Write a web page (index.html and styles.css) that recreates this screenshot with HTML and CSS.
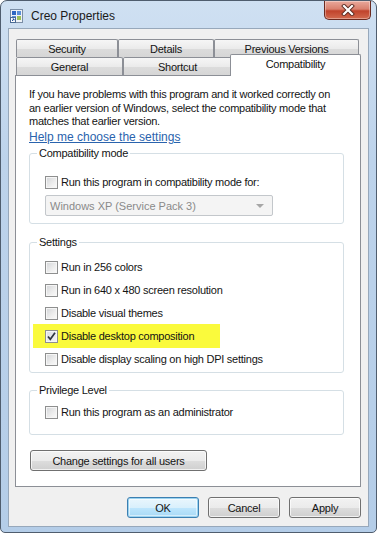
FILE: index.html
```html
<!DOCTYPE html>
<html lang="en">
<head>
    <meta charset="UTF-8">
    <meta name="viewport" content="width=device-width, initial-scale=1.0">
    <title>Creo Properties</title>
    <link rel="stylesheet" href="styles.css">
</head>
<body>
    <div class="window">
        <div class="titlebar">
            <svg class="app-icon" width="13" height="14" viewBox="0 0 13 14">
                <rect x="0.5" y="0.5" width="12" height="13" fill="#eef3f8" stroke="#7b8ea6"/>
                <rect x="2" y="2" width="4" height="4" fill="#2f67c2"/>
                <rect x="7" y="2" width="4" height="4" fill="#5b8fd8"/>
                <rect x="2" y="7" width="4" height="4" fill="#5b8fd8"/>
                <rect x="7" y="7" width="4" height="4" fill="#9cc05a"/>
                <rect x="0.5" y="8.5" width="5" height="5" fill="#fff" stroke="#4b6b95"/>
                <path d="M2 12 L4 10 M2.6 10 H4 V11.4" stroke="#1f4f9a" stroke-width="1" fill="none"/>
            </svg>
            <span class="title">Creo Properties</span>
            <div class="close">
                <svg width="14" height="12" viewBox="0 0 14 12">
                    <path d="M3 2 L11 10 M11 2 L3 10" stroke="#5a2a22" stroke-width="4" stroke-linecap="square"/>
                    <path d="M3 2 L11 10 M11 2 L3 10" stroke="#ffffff" stroke-width="2.2" stroke-linecap="square"/>
                </svg>
            </div>
        </div>

        <div class="client">
            <div class="tabs">
                <div class="tab-row">
                    <div class="tab tab-security">Security</div>
                    <div class="tab tab-details">Details</div>
                    <div class="tab tab-versions">Previous Versions</div>
                </div>
                <div class="tab-row front">
                    <div class="tab tab-general">General</div>
                    <div class="tab tab-shortcut">Shortcut</div>
                    <div class="tab tab-compat active">Compatibility</div>
                </div>
            </div>

            <div class="panel">
                <p class="intro">If you have problems with this program and it worked correctly on<br>an earlier version of Windows, select the compatibility mode that<br>matches that earlier version.</p>
                <a class="help" href="#">Help me choose the settings</a>

                <fieldset class="group group-mode">
                    <legend>Compatibility mode</legend>
                    <div class="check-row">
                        <span class="box"></span>
                        <span>Run this program in compatibility mode for:</span>
                    </div>
                    <div class="select">
                        <span>Windows XP (Service Pack 3)</span>
                        <span class="arrow"></span>
                    </div>
                </fieldset>

                <fieldset class="group group-settings">
                    <legend>Settings</legend>
                    <div class="check-list">
                        <div class="check-row"><span class="box"></span><span>Run in 256 colors</span></div>
                        <div class="check-row"><span class="box"></span><span>Run in 640 x 480 screen resolution</span></div>
                        <div class="check-row"><span class="box"></span><span>Disable visual themes</span></div>
                        <div class="check-row marked">
                            <span class="box">
                                <svg width="11" height="11" viewBox="0 0 11 11">
                                    <path d="M2 5.5 L4.3 8.3 L9 1.8" stroke="#2f3540" stroke-width="1.7" fill="none"/>
                                </svg>
                            </span>
                            <span>Disable desktop composition</span>
                        </div>
                        <div class="check-row"><span class="box"></span><span>Disable display scaling on high DPI settings</span></div>
                    </div>
                </fieldset>

                <fieldset class="group group-privilege">
                    <legend>Privilege Level</legend>
                    <div class="check-row"><span class="box"></span><span>Run this program as an administrator</span></div>
                </fieldset>

                <button class="btn btn-wide">Change settings for all users</button>
            </div>

            <div class="actions">
                <button class="btn btn-default">OK</button>
                <button class="btn">Cancel</button>
                <button class="btn">Apply</button>
            </div>
        </div>
    </div>
</body>
</html>
```

FILE: styles.css
```css
:root {
    --text-color: #141414;
    --face-color: #f0f0f0;
    --tab-border: #8c8f96;
    --group-border: #d5dfe5;
    --link-color: #2a63ad;
}

* {
    margin: 0;
    padding: 0;
    box-sizing: border-box;
}

body {
    font-family: "Liberation Sans", Arial, sans-serif;
    font-size: 11px;
    letter-spacing: -0.25px;
    color: var(--text-color);
    background-color: #ffffff;
    width: 377px;
    height: 533px;
    overflow: hidden;
}

.window {
    width: 377px;
    height: 533px;
    display: flex;
    flex-direction: column;
    padding: 0 7px 5px 7px;
    border: 1px solid #4f5d6e;
    border-radius: 7px 7px 5px 5px;
    background: linear-gradient(180deg, #cfe0f2 0%, #bdd3eb 30%, #b4cde8 100%);
}

/* title bar */

.titlebar {
    flex-shrink: 0;
    height: 27px;
    display: flex;
    align-items: flex-start;
}

.app-icon {
    margin: 8px 0 0 2px;
}

.title {
    margin: 8px 0 0 8px;
    font-size: 12px;
    letter-spacing: 0;
    color: #1a1a1a;
}

.close {
    margin-left: auto;
    margin-right: -2px;
    width: 47px;
    height: 19px;
    display: flex;
    align-items: center;
    justify-content: center;
    border: 1px solid #6b2a20;
    border-top: none;
    border-radius: 0 0 5px 5px;
    background: linear-gradient(180deg, #e9a99c 0%, #d9806e 45%, #c0432c 55%, #d26a4f 100%);
    box-shadow: inset 0 0 0 1px rgba(255, 255, 255, 0.35);
}

/* client area */

.client {
    flex: 1;
    min-height: 0;
    display: flex;
    flex-direction: column;
    background-color: var(--face-color);
    border: 1px solid #97a8bb;
    padding: 10px 7px 0 6px;
}

.tabs {
    margin-left: 1px;
}

.tab-row {
    display: flex;
    height: 18px;
}

.tab {
    height: 18px;
    display: flex;
    align-items: center;
    justify-content: center;
    border: 1px solid var(--tab-border);
    border-bottom: none;
    border-radius: 2px 2px 0 0;
    background: linear-gradient(180deg, #f6f6f6 0%, #ebebeb 50%, #dcdcdc 51%, #d6d6d6 100%);
    font-size: 11px;
}

.tab-security { width: 102px; }
.tab-details { width: 96px; }
.tab-versions { width: 145px; }
.tab-general { width: 107px; }
.tab-shortcut { width: 109px; }

.tab.active {
    width: 131px;
    height: 22px;
    margin: -3px -1px -1px -2px;
    align-items: flex-start;
    padding-top: 3px;
    background: #ffffff;
    position: relative;
    z-index: 1;
}

.panel {
    flex-shrink: 0;
    background-color: #ffffff;
    border: 1px solid var(--tab-border);
    padding: 12px 16px 15px 13px;
}

.intro {
    line-height: 13.5px;
    white-space: nowrap;
}

.help {
    display: inline-block;
    margin-top: 1.5px;
    font-size: 12px;
    letter-spacing: 0;
    line-height: 14px;
    color: var(--link-color);
}

/* group boxes */

.group {
    margin-top: 2px;
    border: 1px solid var(--group-border);
    border-radius: 3px;
    padding: 14px 15px 7px 15px;
}

.group legend {
    margin-left: -8px;
    padding: 0 2px;
    line-height: 14px;
}

.group-settings {
    margin-top: 11px;
    padding-top: 10px;
    padding-bottom: 5px;
}

.group-privilege {
    margin-top: 10px;
    padding-top: 7px;
    padding-bottom: 14px;
}

.check-list {
    display: flex;
    flex-direction: column;
    gap: 7px;
}

.check-row {
    height: 16px;
    display: flex;
    align-items: center;
    gap: 3px;
}

.check-row.marked {
    width: 187px;
    height: 24px;
    margin: -4px 0 -4px -12px;
    padding-left: 12px;
    background-color: #fafa3c;
}

.box {
    width: 13px;
    height: 13px;
    display: flex;
    align-items: center;
    justify-content: center;
    border: 1px solid #8e8f8f;
    background: linear-gradient(135deg, #d2d4d7 0%, #eeeeee 60%, #fbfbfb 100%);
    box-shadow: inset 0 0 0 1px #f6f6f6;
}

.marked .box {
    background: linear-gradient(135deg, #dadde2 0%, #f4f4f4 100%);
}

.select {
    margin-top: 5px;
    width: 228px;
    height: 21px;
    display: flex;
    align-items: center;
    justify-content: space-between;
    padding: 0 8px 0 4px;
    border: 1px solid #c3c7cb;
    border-radius: 2px;
    background-color: #f4f4f4;
    color: #8a8a8a;
    letter-spacing: 0;
}

.arrow {
    width: 0;
    height: 0;
    border-left: 4px solid transparent;
    border-right: 4px solid transparent;
    border-top: 4px solid #a6a6a6;
}

/* buttons */

.btn {
    height: 21px;
    font-family: inherit;
    font-size: 11px;
    letter-spacing: inherit;
    color: var(--text-color);
    border: 1px solid #707070;
    border-radius: 3px;
    background: linear-gradient(180deg, #f2f2f2 0%, #ebebeb 50%, #dddddd 51%, #cfcfcf 100%);
    box-shadow: inset 0 0 0 1px rgba(255, 255, 255, 0.7);
}

.btn-wide {
    display: block;
    margin: 15px 0 0 1px;
    width: 177px;
}

.actions {
    display: flex;
    justify-content: flex-end;
    gap: 9px;
    margin-top: 10px;
}

.actions .btn {
    width: 72px;
}

.btn-default {
    border-color: #3c7fb1;
    background: linear-gradient(180deg, #eaf6fd 0%, #d9f0fc 50%, #bee6fd 51%, #a7d9f5 100%);
    box-shadow: inset 0 0 0 1px #9ad3f0, inset 0 0 0 2px rgba(255, 255, 255, 0.5);
}
```
